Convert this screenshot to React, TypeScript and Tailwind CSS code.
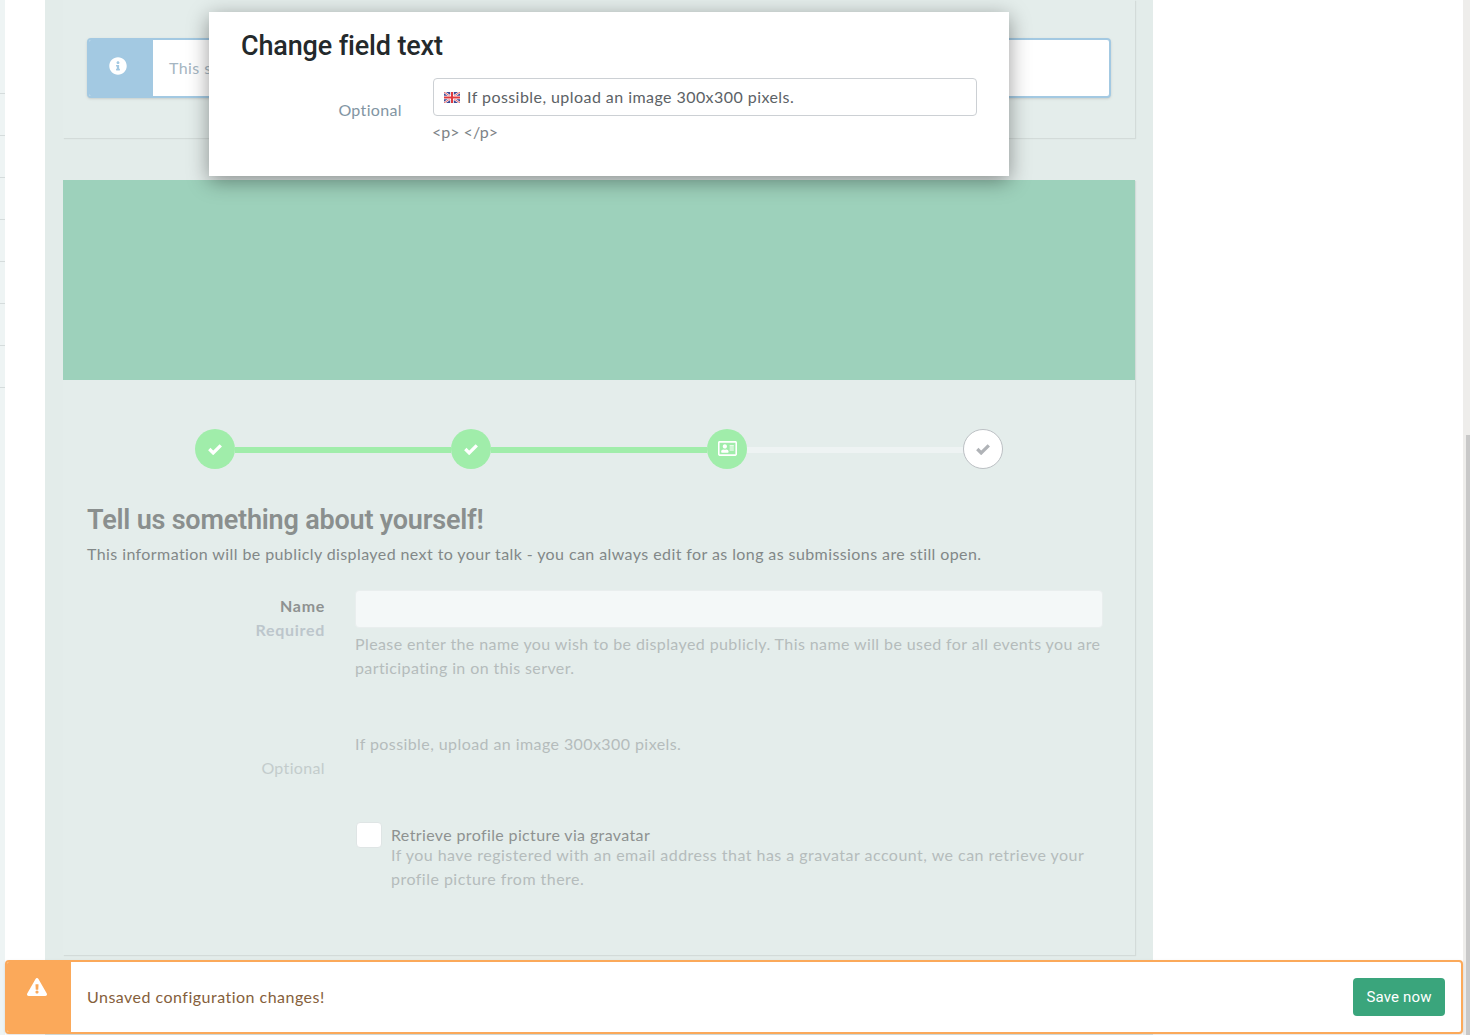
import React from 'react';
import { FaExclamationTriangle, FaInfoCircle, FaRegAddressCard } from 'react-icons/fa';

const body = "font-['Lato',sans-serif]";
const head = "font-['Roboto',sans-serif]";

function UkFlag() {
  return (
    <svg width="16" height="11" viewBox="0 0 16 11" className="shrink-0">
      <rect width="16" height="11" fill="#3d4a96" />
      <path d="M0 0L16 11M16 0L0 11" stroke="#fff" strokeWidth="2.2" />
      <path d="M0 0L16 11M16 0L0 11" stroke="#e0393e" strokeWidth="0.8" />
      <path d="M8 0V11M0 5.5H16" stroke="#fff" strokeWidth="3.6" />
      <path d="M8 0V11M0 5.5H16" stroke="#e0393e" strokeWidth="2" />
    </svg>
  );
}

function Check() {
  return (
    <svg width="14" height="12" viewBox="0 0 14 12" className="-mt-px">
      <path d="M1.3 6L5.2 9.9L12.8 2.3" fill="none" stroke="currentColor" strokeWidth="3.3" />
    </svg>
  );
}

function Connector({ done }: { done: boolean }) {
  return <div className={`h-[6px] w-[216px] mt-[2px] ${done ? 'bg-[#a0edaa]' : 'bg-[#eef3f3]'}`} />;
}

function DoneStep() {
  return (
    <div className="w-[40px] h-[40px] rounded-full bg-[#a0edaa] flex items-center justify-center text-white">
      <Check />
    </div>
  );
}

export default function App() {
  const ticks = [0, 1, 2, 3, 4, 5, 6, 7];

  return (
    <div className={`relative h-[1035px] w-[1470px] overflow-hidden flex bg-white ${body}`}>
      <div className="w-[5px] bg-[#eef4f4] pt-[93px] flex flex-col gap-[41px]">
        {ticks.map((t) => (
          <div key={t} className="h-px bg-[#d5dcdc]" />
        ))}
      </div>
      <div className="w-[40px] bg-white" />

      <main className="w-[1108px] bg-[#e3ecea] pl-[18px] pr-[18px]">
        <section className="h-[138px] bg-[#e4edeb] shadow-[1px_1px_1px_rgba(0,0,0,0.07)] pt-[38px] pl-[24px] pr-[24px]">
          <div className="h-[60px] flex rounded-[4px] border-2 border-[#a3c9e2] bg-white shadow-sm overflow-hidden">
            <div className="w-[66px] -ml-[2px] bg-[#a3c9e2] flex justify-center pt-[17px] pr-[4px] text-white">
              <FaInfoCircle size={18} />
            </div>
            <p className="pl-[16px] pt-[16px] text-[16px] leading-[24px] text-[#a6b6c2] tracking-[0.42px]">This step</p>
          </div>
        </section>

        <section className="mt-[42px] h-[775px] bg-[#e4edeb] shadow-[1px_1px_1px_rgba(0,0,0,0.07)]">
          <div className="h-[200px] bg-[#9dd1bb]" />

          <div className="flex items-start pl-[132px] mt-[49px]">
            <DoneStep />
            <div className="self-center"><Connector done /></div>
            <DoneStep />
            <div className="self-center"><Connector done /></div>
            <div className="w-[40px] h-[40px] rounded-full bg-[#a0edaa] flex items-center justify-center text-white">
              <FaRegAddressCard size={19} className="-mt-[2px]" />
            </div>
            <div className="self-center"><Connector done={false} /></div>
            <div className="w-[40px] h-[40px] rounded-full bg-white border border-[#bcc0c4] flex items-center justify-center text-[#b0b3b7]">
              <Check />
            </div>
          </div>

          <div className="pl-[24px] pr-[32px] mt-[33px]">
            <h2 className={`text-[27px] leading-[36px] font-semibold tracking-[-0.2px] text-[#8a8f8e] ${head}`}>Tell us something about yourself!</h2>
            <p className="mt-[4px] text-[16px] leading-[24px] text-[#828888] tracking-[0.41px]">
              This information will be publicly displayed next to your talk - you can always edit for as long as submissions are still open.
            </p>

            <div className="mt-[24px] grid grid-cols-[238px_748px] gap-x-[30px]">
              <div className="text-right pt-[4px] text-[16px] leading-[24px] font-bold tracking-[0.7px]">
                <div className="text-[#8e9291]">Name</div>
                <div className="text-[#bcc6cc]">Required</div>
              </div>
              <div>
                <div className="h-[38px] rounded-[4px] border border-[#e9eeee] bg-[#f4f8f8]" />
                <p className="mt-[4px] text-[16px] leading-[24px] text-[#b5bcbc] tracking-[0.4px]">
                  Please enter the name you wish to be displayed publicly. This name will be used for all events you are participating in on this server.
                </p>
              </div>

              <div className="text-right pt-[76px] text-[16px] leading-[24px] text-[#c3cccc] tracking-[0.35px]">Optional</div>
              <div className="pt-[52px]">
                <p className="text-[16px] leading-[24px] text-[#b5bcbc] tracking-[0.42px]">If possible, upload an image 300x300 pixels.</p>
                <div className="mt-[66px] flex gap-[9px]">
                  <div className="w-[26px] h-[26px] ml-px shrink-0 rounded-[4px] border border-[#dfe5e5] bg-white" />
                  <div className="text-[16px] tracking-[0.37px]">
                    <div className="leading-[22px] mt-[2px] text-[#8e9291]">Retrieve profile picture via gravatar</div>
                    <p className="leading-[24px] text-[#b5bcbc] -mt-[3px] tracking-[0.47px]">
                      If you have registered with an email address that has a gravatar account, we can retrieve your profile picture from there.
                    </p>
                  </div>
                </div>
              </div>
            </div>
          </div>
        </section>
      </main>

      <div className="flex-1 bg-white" />
      <div className="w-[7px] bg-[#eeedeb] pl-[3px] pt-[435px]">
        <div className="h-[600px] bg-[#c8c8c8]" />
      </div>

      {/* modal over the page */}
      <div className="absolute left-[209px] top-[12px] w-[800px] h-[164px] bg-white px-[32px] pt-[16px] shadow-[0_5px_20px_rgba(0,0,0,0.4)]">
        <h3 className={`text-[27px] leading-[36px] font-medium tracking-[-0.15px] text-[#24292b] ${head}`}>Change field text</h3>
        <div className="mt-[14px] grid grid-cols-[161px_544px] gap-x-[31px]">
          <div className="text-right pt-[20px] text-[16px] leading-[24px] text-[#8295a3] tracking-[0.35px]">Optional</div>
          <div>
            <div className="h-[38px] rounded-[4px] border border-[#ccd0d4] flex items-center gap-[7px] pl-[10px] text-[16px] text-[#5c6266] tracking-[0.44px]">
              <UkFlag />
              <span>If possible, upload an image 300x300 pixels.</span>
            </div>
            <div className="mt-[4px] -ml-px text-[16px] leading-[24px] text-[#7d8387]">&lt;p&gt; &lt;/p&gt;</div>
          </div>
        </div>
      </div>

      {/* unsaved changes bar */}
      <div className="absolute left-[5px] bottom-[1px] w-[1458px] h-[74px] flex rounded-[4px] border-2 border-[#fba95a] bg-white shadow-sm overflow-hidden">
        <div className="w-[66px] -ml-[2px] bg-[#fba95a] flex justify-center pt-[15px] pr-[3px] text-white">
          <FaExclamationTriangle size={20} />
        </div>
        <p className="flex-1 pl-[16px] self-center text-[16px] text-[#85603b] tracking-[0.48px]">Unsaved configuration changes!</p>
        <button className={`self-center mr-[16px] h-[38px] w-[92px] pt-px rounded-[4px] bg-[#3aa57c] text-white text-[15px] tracking-[0.15px] ${head}`}>Save now</button>
      </div>
    </div>
  );
}
